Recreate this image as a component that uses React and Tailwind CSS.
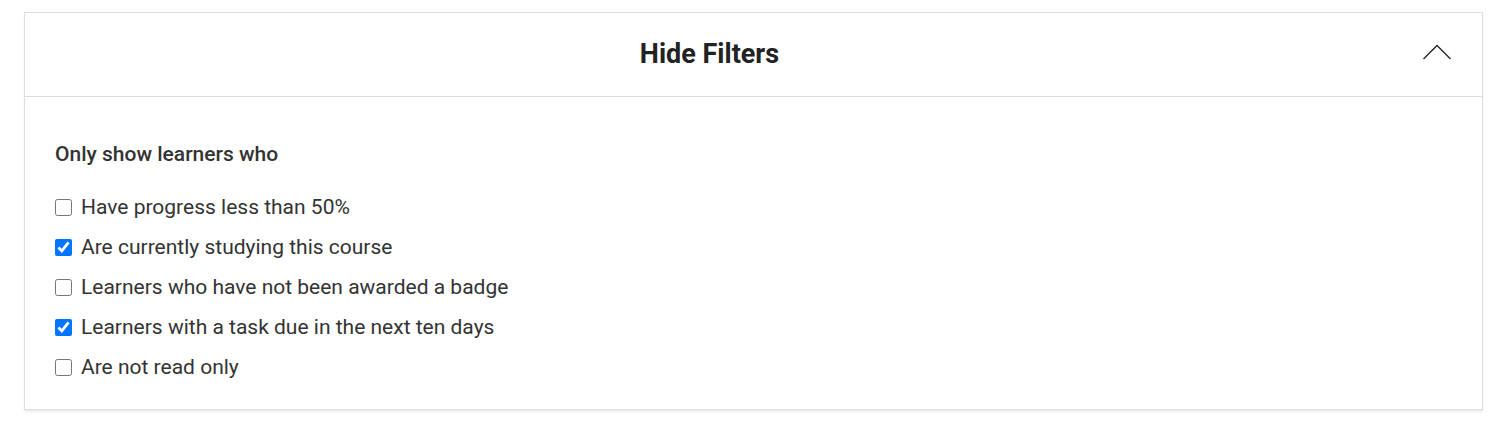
import { useState } from "react";

const OPTIONS = [
  { label: "Have progress less than 50%", checked: false },
  { label: "Are currently studying this course", checked: true },
  { label: "Learners who have not been awarded a badge", checked: false },
  { label: "Learners with a task due in the next ten days", checked: true },
  { label: "Are not read only", checked: false },
];

const App = () => {
  const [opts, setOpts] = useState(OPTIONS);
  const [open, setOpen] = useState(true);

  const toggle = (i) =>
    setOpts((o) => o.map((x, j) => (j === i ? { ...x, checked: !x.checked } : x)));

  return (
    <div className="bg-white min-h-[423px] pt-[12px] pl-[24px] pr-[12px] font-['Roboto',sans-serif]">
      <div className="border border-[#dedede] bg-white shadow-[0_2px_2px_rgba(0,0,0,0.08)]">
        <div className="h-[84px] flex items-center border-b border-[#dedede]">
          <h2 className="flex-1 text-center text-[27px] font-bold text-[#222]">Hide Filters</h2>
          <button
            className="w-[88px] h-full flex items-center justify-center"
            onClick={() => setOpen(!open)}
          >
            <svg
              className="mt-[-6px] ml-[-2px]"
              width="30"
              height="18"
              viewBox="0 0 30 18"
              fill="none"
              stroke="#222"
              strokeWidth="1.3"
            >
              <path d="M1.5 16 L15 2.5 L28.5 16" />
            </svg>
          </button>
        </div>
        <div className="pl-[30px] pt-[42px] pb-[28px]">
          <p className="text-[21px] font-medium text-[#333] mb-[24px]">Only show learners who</p>
          <div className="flex flex-col gap-[14px]">
            {opts.map((o, i) => (
              <label key={o.label} className="flex items-center gap-[9px] h-[26px] text-[21px] text-[#333]">
                <input
                  type="checkbox"
                  checked={o.checked}
                  onChange={() => toggle(i)}
                  className="w-[17px] h-[17px] m-0 accent-[#0075ff]"
                />
                {o.label}
              </label>
            ))}
          </div>
        </div>
      </div>
    </div>
  );
};

export default App;
